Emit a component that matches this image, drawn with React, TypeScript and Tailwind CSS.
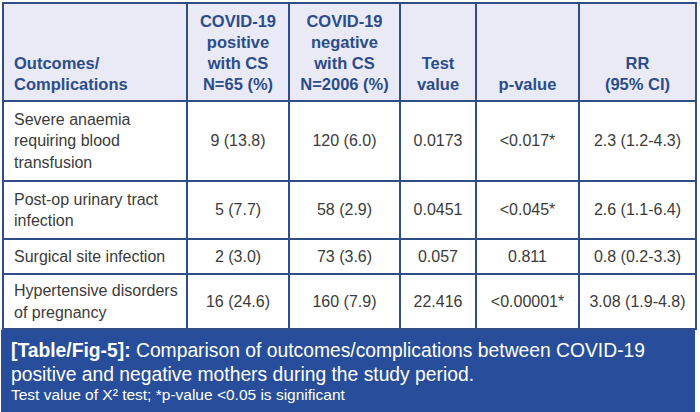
const HEADERS = [
  { label: ['Outcomes/', 'Complications'], align: 'text-left pl-[10px]' },
  { label: ['COVID-19', 'positive', 'with CS', 'N=65 (%)'], align: 'text-center' },
  { label: ['COVID-19', 'negative', 'with CS', 'N=2006 (%)'], align: 'text-center' },
  { label: ['Test', 'value'], align: 'text-center' },
  { label: ['p-value'], align: 'text-center' },
  { label: ['RR', '(95% CI)'], align: 'text-center' },
]

const ROWS = [
  { h: 'h-[80px]', cells: [['Severe anaemia', 'requiring blood', 'transfusion'], '9 (13.8)', '120 (6.0)', '0.0173', '<0.017*', '2.3 (1.2-4.3)'] },
  { h: 'h-[58px]', cells: [['Post-op urinary tract', 'infection'], '5 (7.7)', '58 (2.9)', '0.0451', '<0.045*', '2.6 (1.1-6.4)'] },
  { h: 'h-[35px]', cells: [['Surgical site infection'], '2 (3.0)', '73 (3.6)', '0.057', '0.811', '0.8 (0.2-3.3)'] },
  { h: 'h-[55px]', cells: [['Hypertensive disorders', 'of pregnancy'], '16 (24.6)', '160 (7.9)', '22.416', '<0.00001*', '3.08 (1.9-4.8)'] },
]

const WIDTHS = ['w-[184px]', 'w-[102px]', 'w-[111px]', 'w-[76px]', 'w-[103px]', 'w-[117px]']

export default function App() {
  return (
    <div className="w-[700px] h-[412px] bg-white pl-[2px] pt-[2px] font-['Liberation_Sans',Arial,sans-serif]">
      <table className="table-fixed border-collapse w-[693px]">
        <colgroup>
          {WIDTHS.map((w, i) => <col key={i} className={w} />)}
        </colgroup>
        <thead>
          <tr className="h-[98px] bg-[#e9eaf6]">
            {HEADERS.map((h, i) => (
              <th
                key={i}
                className={`border-2 border-[#2f4d87] align-bottom pb-[5px] font-bold text-[16.5px] leading-[21px] text-[#2c4c8c] ${h.align}`}
              >
                {h.label.map((l, j) => <div key={j}>{l}</div>)}
              </th>
            ))}
          </tr>
        </thead>
        <tbody>
          {ROWS.map((r, i) => (
            <tr key={i} className={r.h}>
              {r.cells.map((c, j) => (
                <td
                  key={j}
                  className={`border-2 border-[#2f4d87] align-middle text-[16px] leading-[21.5px] text-[#3b3b3b] ${j === 0 ? 'text-left pl-[10px]' : 'text-center'}`}
                >
                  {Array.isArray(c) ? c.map((l, k) => <div key={k}>{l}</div>) : c}
                </td>
              ))}
            </tr>
          ))}
        </tbody>
      </table>
      <div className="w-[694px] h-[84px] -ml-[1px] bg-[#284e9b] text-white pl-[10px] pt-[9px]">
        <div className="text-[19.3px] leading-[24px]">
          <span className="font-bold">[Table/Fig-5]:</span> Comparison of outcomes/complications between COVID-19
        </div>
        <div className="text-[19.3px] leading-[24px]">positive and negative mothers during the study period.</div>
        <div className="text-[15.5px] leading-[15px]">Test value of X² test; *p-value &lt;0.05 is significant</div>
      </div>
    </div>
  )
}
